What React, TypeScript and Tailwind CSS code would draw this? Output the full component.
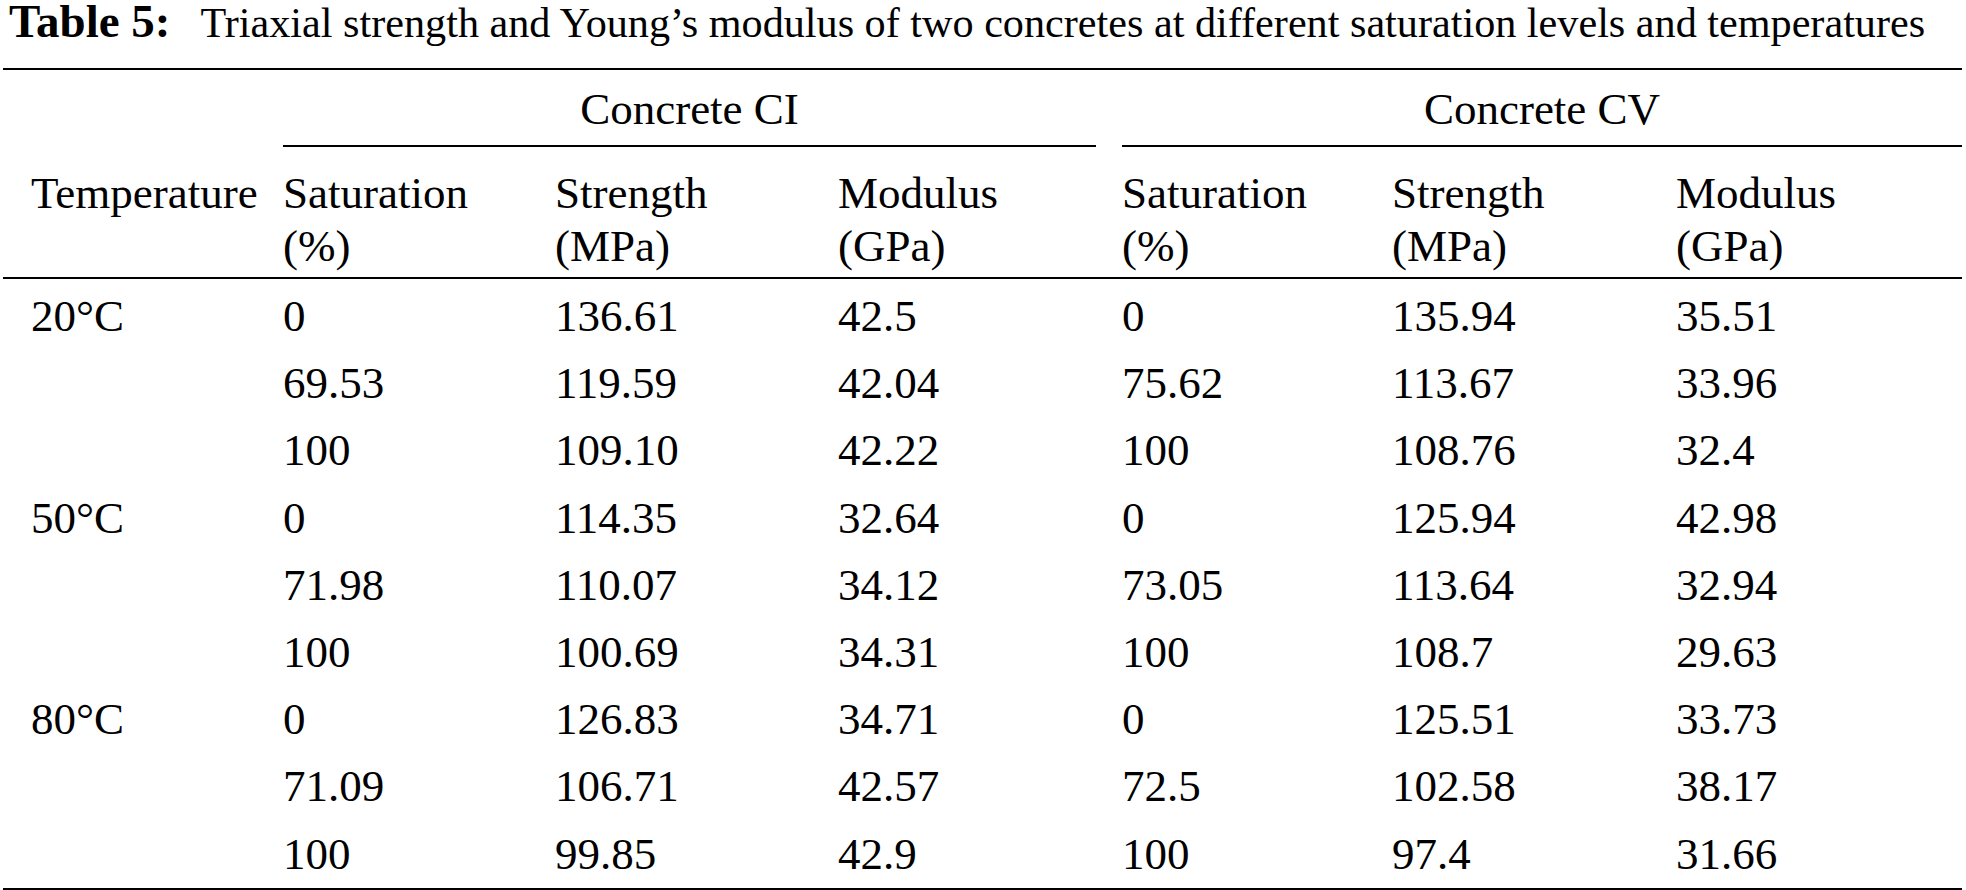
import React from "react";

const rows: string[][] = [
  ["20°C", "0", "136.61", "42.5", "0", "135.94", "35.51"],
  ["", "69.53", "119.59", "42.04", "75.62", "113.67", "33.96"],
  ["", "100", "109.10", "42.22", "100", "108.76", "32.4"],
  ["50°C", "0", "114.35", "32.64", "0", "125.94", "42.98"],
  ["", "71.98", "110.07", "34.12", "73.05", "113.64", "32.94"],
  ["", "100", "100.69", "34.31", "100", "108.7", "29.63"],
  ["80°C", "0", "126.83", "34.71", "0", "125.51", "33.73"],
  ["", "71.09", "106.71", "42.57", "72.5", "102.58", "38.17"],
  ["", "100", "99.85", "42.9", "100", "97.4", "31.66"],
];

const grid = "grid grid-cols-[280px_272px_283px_284px_270px_284px_286px]";

export default function App() {
  return (
    <div
      className="w-[1966px] h-[890px] bg-white text-black overflow-hidden"
      style={{ fontFamily: '"Liberation Serif", "Times New Roman", serif' }}
    >
      <div className="ml-[3px] w-[1959px]">
        <div className="h-[38px] leading-[42px] whitespace-nowrap pl-[6px]">
          <span className="font-bold text-[47px]">Table 5:</span>
          <span className="ml-[30px] text-[42.2px]">Triaxial strength and Young’s modulus of two concretes at different saturation levels and temperatures</span>
        </div>
        <div className="mt-[30px] h-[2px] bg-black" />
        <div className="text-[45px] whitespace-nowrap">
          <div className={grid}>
            <div />
            <div className="col-span-3 mr-[26px] border-b-2 border-black pt-[15px] pb-[12px] leading-[48px] text-center">
              Concrete CI
            </div>
            <div className="col-span-3 border-b-2 border-black pt-[15px] pb-[12px] leading-[48px] text-center">
              Concrete CV
            </div>
          </div>
          <div className={`${grid} pt-[20px] pb-[4px] leading-[53px]`}>
            <div className="pl-[28px]">Temperature</div>
            <div>Saturation<br />(%)</div>
            <div>Strength<br />(MPa)</div>
            <div>Modulus<br />(GPa)</div>
            <div>Saturation<br />(%)</div>
            <div>Strength<br />(MPa)</div>
            <div>Modulus<br />(GPa)</div>
          </div>
          <div className="h-[2px] bg-black" />
          <div className="pt-[4px]">
            {rows.map((r, i) => (
              <div key={i} className={`${grid} leading-[67.2px]`}>
                {r.map((c, j) => (
                  <div key={j} className={j === 0 ? "pl-[28px]" : ""}>
                    {c}
                  </div>
                ))}
              </div>
            ))}
          </div>
          <div className="h-[2px] bg-black" />
        </div>
      </div>
    </div>
  );
}
